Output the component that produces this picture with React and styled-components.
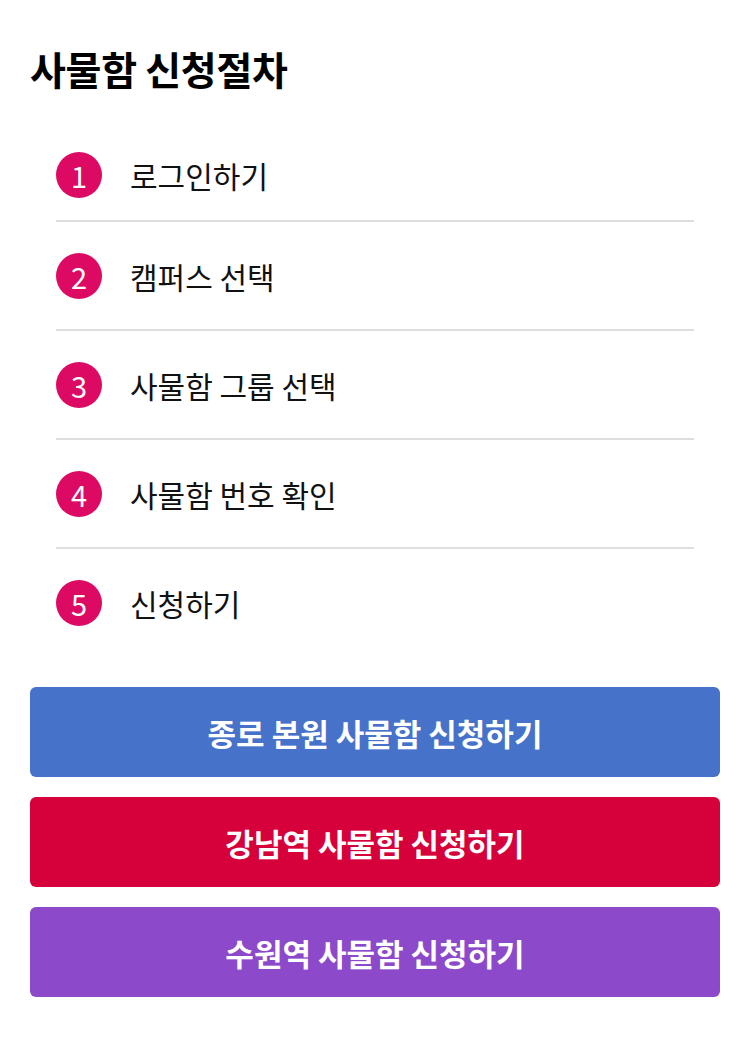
import React from "react";
import styled, { createGlobalStyle } from "styled-components";

const GlobalStyle = createGlobalStyle`
  html, body {
    margin: 0;
    padding: 0;
    background: #fff;
  }
  body {
    font-family: "Noto Sans CJK KR", "Noto Sans", sans-serif;
    color: #111;
  }
`;

const Page = styled.main`
  padding: 42px 30px 30px;
  width: 690px;
`;

const Title = styled.h2`
  margin: 0 0 27px;
  font-size: 39px;
  line-height: 52px;
  font-weight: 700;
  letter-spacing: -0.3px;
  color: #000;
`;

const StepList = styled.ol`
  list-style: none;
  margin: 0;
  padding: 0 26px;
`;

const Step = styled.li`
  display: flex;
  align-items: center;
  gap: 28px;
  padding: 31px 0 30px;
  border-bottom: 2px solid #dedede;

  &:first-child {
    padding-bottom: 22px;
  }

  &:last-child {
    border-bottom: none;
  }
`;

const StepNumber = styled.span`
  flex: none;
  width: 46px;
  height: 46px;
  border-radius: 50%;
  background: #dc0a63;
  color: #fff;
  display: flex;
  align-items: center;
  justify-content: center;
  font-size: 29px;
  line-height: 1;
`;

const StepLabel = styled.span`
  font-size: 30px;
  line-height: 40px;
  color: #111;
`;

const Buttons = styled.div`
  display: flex;
  flex-direction: column;
  gap: 20px;
  margin-top: 31px;
`;

const ApplyButton = styled.button`
  height: 90px;
  border: none;
  border-radius: 6px;
  background: ${(p) => p.$color};
  color: #fff;
  font-family: inherit;
  font-size: 31px;
  font-weight: 700;
  cursor: pointer;
`;

const steps = ["로그인하기", "캠퍼스 선택", "사물함 그룹 선택", "사물함 번호 확인", "신청하기"];

const campuses = [
  { label: "종로 본원 사물함 신청하기", color: "#4672c9" },
  { label: "강남역 사물함 신청하기", color: "#d6003b" },
  { label: "수원역 사물함 신청하기", color: "#8c4aca" },
];

function App() {
  return (
    <Page>
      <GlobalStyle />
      <Title>사물함 신청절차</Title>
      <StepList>
        {steps.map((step, i) => (
          <Step key={step}>
            <StepNumber>{i + 1}</StepNumber>
            <StepLabel>{step}</StepLabel>
          </Step>
        ))}
      </StepList>
      <Buttons>
        {campuses.map((c) => (
          <ApplyButton key={c.label} $color={c.color}>
            {c.label}
          </ApplyButton>
        ))}
      </Buttons>
    </Page>
  );
}

export default App;
